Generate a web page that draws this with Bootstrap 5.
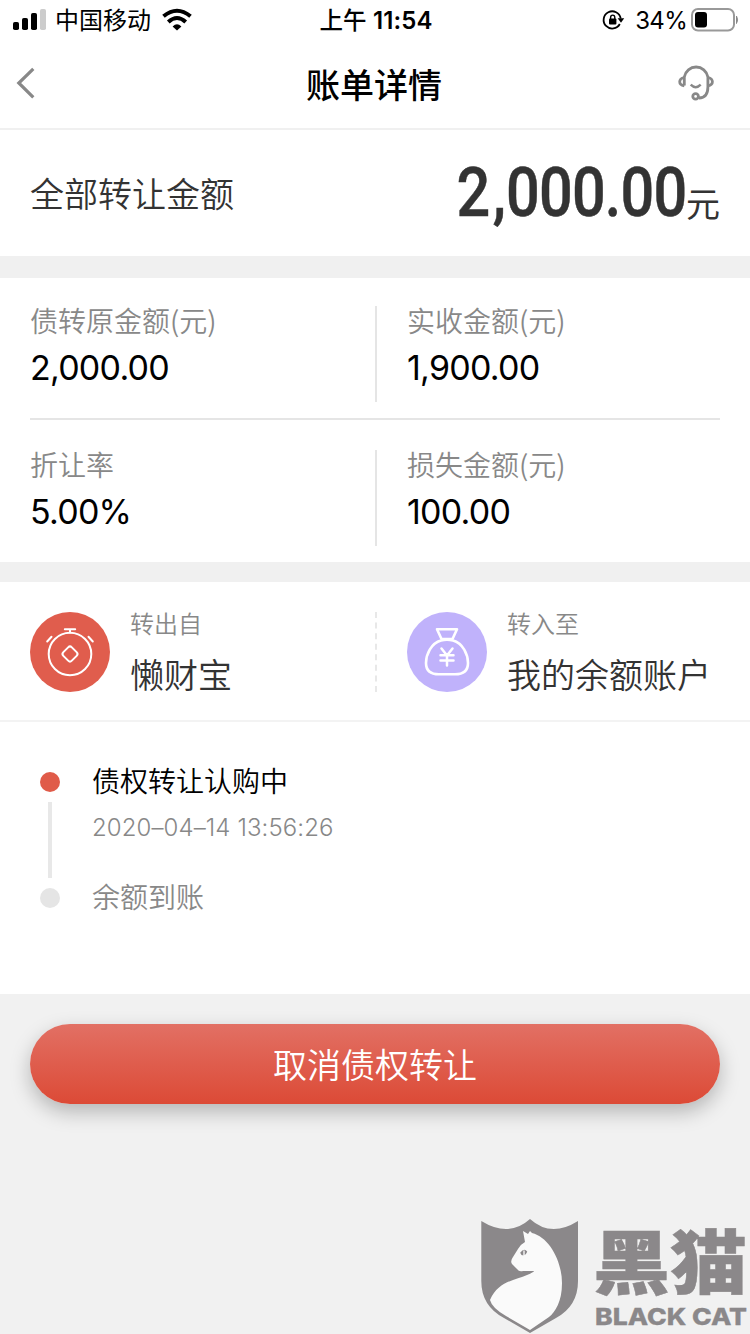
<!DOCTYPE html>
<html lang="zh-CN">
<head>
<meta charset="utf-8">
<meta name="viewport" content="width=device-width, initial-scale=1">
<title>账单详情</title>
<link rel="stylesheet" href="https://cdn.jsdelivr.net/npm/bootstrap@5.3.0/dist/css/bootstrap.min.css">
<style>
  body { font-family: Inter, "Noto Sans CJK SC", sans-serif; background: #f1f1f1; color: #000; height: 1334px; overflow: hidden; }
  svg { display: block; flex: none; overflow: visible; }
  .thin-text { font-family: "Noto Sans CJK SC DemiLight", "Noto Sans CJK SC", sans-serif; font-weight: 350; }
  .status-bar { height: 40px; font-size: 24px; line-height: 40px; padding: 0 11px 0 13px; }
  .status-side { flex: 1 1 0; }
  .status-side span, .status-time { padding-top: 2px; }
  .carrier { margin: 0 11px 0 9px; }
  .charge { margin: 0 4px 0 10px; letter-spacing: -.7px; }
  .status-time { font-weight: 500; font-size: 23.5px; letter-spacing: .1px; }
  .status-time b { font-weight: 600; font-size: 24px; }
  .title-bar { height: 90px; border-bottom: 2px solid #f0f0f0; padding: 0 36px 0 16px; }
  .title-bar > svg:last-child { margin-left: auto; }
  .title-bar h1 { font-size: 34px; font-weight: 500; line-height: 88px; padding-top: 3px; margin: 0 0 0 270px; }
  .panel { background: #fff; padding: 0 30px; }
  .total { height: 126px; color: #333; }
  .total-label { font-size: 34px; line-height: 126px; }
  .total-sum { font: 500 69px/126px Roboto, sans-serif; transform: scaleX(.86); transform-origin: right; letter-spacing: -.95px; -webkit-text-stroke: .5px #333; }
  .total-sum i { font-style: normal; margin: 0 1px 0 4px; }
  .total-unit { font-size: 34px; line-height: 40px; padding-top: 24px; }
  .band { height: 22px; background: #f0f0f0; }
  .band-thin { height: 20px; }
  .figures { height: 284px; }
  .pair { height: 140px; padding-top: 28px; }
  .pair + .pair { height: 144px; padding-top: 30px; border-top: 2px solid #e5e5e5; }
  .half-left { width: 345px; height: 96px; }
  .half-right { height: 96px; padding-left: 30px; border-left: 2px solid #e5e5e5; }
  .caption { font-size: 28px; line-height: 28px; color: #888; }
  .value { font-size: 34px; line-height: 40px; margin-top: 14px; letter-spacing: -.75px; font-weight: 380; }
  .accounts { height: 140px; padding-top: 30px; border-bottom: 2px solid #f3f3f3; }
  .account-left { width: 345px; }
  .account-text { margin: -1px 0 0 20px; }
  .account-right { padding-left: 30px; height: 80px; border-left: 2px dashed #e8e8e8; }
  .from-to { font-size: 24px; line-height: 24px; color: #888; }
  .account-name { font-size: 34px; line-height: 40px; color: #333; margin-top: 19px; white-space: nowrap; }
  .progress-panel { height: 272px; padding: 50px 30px 0 40px; }
  .rail { width: 20px; margin-right: 32px; }
  .dot { width: 20px; height: 20px; border-radius: 50%; background: #e5e5e5; }
  .dot-on { background: #e05b49; }
  .rail-line { width: 4px; height: 76px; margin: 10px 0; background: #e8e8e8; }
  .steps { margin-top: -10px; }
  .step { font-size: 28px; line-height: 36px; }
  .step-later { color: #888; }
  .stamp { font-size: 24px; line-height: 30px; color: #888; margin: 15px 0 35px; font-weight: 300; letter-spacing: .1px; }
  .cancel { width: 690px; height: 80px; margin: 30px 30px 0; padding: 0; font-size: 34px; line-height: 80px; color: #fff; border: 0;
    background: linear-gradient(#e27064, #dc4a36); box-shadow: 0 8px 20px rgba(0,0,0,.25); }
  .brand { width: 270px; height: 116px; margin-top: 114px; }
</style>
<script src="https://cdn.jsdelivr.net/npm/bootstrap@5.3.0/dist/js/bootstrap.bundle.min.js"></script>
</head>
<body>
<header class="bg-white">
  <div class="status-bar d-flex align-items-center">
    <div class="status-side d-flex align-items-center">
      <svg width="33" height="22" viewBox="0 0 33 22"><rect y="13" width="6" height="8" rx="1.8"/><rect x="9" y="9" width="6" height="12" rx="1.8"/><rect x="18" y="4" width="6" height="17" rx="1.8"/><rect x="27" width="6" height="21" rx="1.8" fill="#ccc"/></svg>
      <span class="carrier">中国移动</span>
      <svg width="30" height="22" viewBox="0 0 30 22" fill="none" stroke="#000" stroke-width="4"><path d="M1.5 7.2Q15-3.8 28.5 7.2"/><path d="M6.3 13Q15 5 23.7 13"/><path d="M10.6 17.4Q15 13.2 19.4 17.4L15 21.5Z" fill="#000" stroke="none"/></svg>
    </div>
    <div class="status-time">上午 <b>11:54</b></div>
    <div class="status-side d-flex align-items-center justify-content-end">
      <svg width="22" height="20" viewBox="0 0 22 20"><path d="M16.8 14A8.6 8.6 0 1 1 17.7 8.5" fill="none" stroke="#000" stroke-width="1.8"/><path d="M14.6 8.2H21.2L18 12.7Z"/><rect x="6" y="8.6" width="7.4" height="6" rx="1"/><path d="M7.6 9V7.4a2.1 2.3 0 0 1 4.2 0V9" fill="none" stroke="#000" stroke-width="1.4"/></svg>
      <span class="charge">34%</span>
      <svg width="48" height="24" viewBox="0 0 48 24"><rect x="1" y="1" width="42" height="21.5" rx="6" fill="none" stroke="#999" stroke-width="2"/><rect x="4" y="4" width="12" height="15.5" rx="3"/><path d="M45.5 8Q47.6 11.8 45.5 15.5Z" fill="#888" stroke="#888"/></svg>
    </div>
  </div>
  <nav class="title-bar d-flex align-items-center">
    <svg width="20" height="32" viewBox="0 0 20 32" fill="none" stroke="#888" stroke-width="3.2"><path d="M17.3 .8 2.8 15 17.3 29.3"/></svg>
    <h1>账单详情</h1>
    <svg width="36" height="38" viewBox="0 0 36 38" fill="none" stroke="#888" stroke-width="2.8"><path d="M6.3 20.5V12a12 12.2 0 0 1 23.6 0V22Q29.9 32.8 21 33"/><path d="M6.3 12.5Q1.7 13.5 1.7 16.8T6.3 20.9"/><path d="M29.9 12.5Q34.4 13.5 34.4 16.8T29.9 20.9"/><path d="M12.7 19.7Q17.7 24.7 22.7 19.7" stroke-width="2.4"/><circle cx="17.6" cy="31.4" r="2.8"/></svg>
  </nav>
</header>
<main>
  <section class="panel total d-flex justify-content-between">
    <div class="total-label thin-text">全部转让金额</div>
    <div class="d-flex align-items-center"><span class="total-sum">2<i>,</i>000.00</span><span class="total-unit">元</span></div>
  </section>
  <div class="band"></div>
  <section class="panel figures">
    <div class="pair d-flex">
      <div class="half-left"><div class="caption thin-text">债转原金额(元)</div><div class="value">2,000.00</div></div>
      <div class="half-right"><div class="caption thin-text">实收金额(元)</div><div class="value">1,900.00</div></div>
    </div>
    <div class="pair d-flex">
      <div class="half-left"><div class="caption thin-text">折让率</div><div class="value">5.00%</div></div>
      <div class="half-right"><div class="caption thin-text">损失金额(元)</div><div class="value">100.00</div></div>
    </div>
  </section>
  <div class="band band-thin"></div>
  <section class="panel accounts d-flex">
    <div class="account-left d-flex">
      <svg width="80" height="80" viewBox="0 0 80 80" fill="none" stroke="#fff" stroke-width="2" stroke-linecap="round"><circle cx="40" cy="40" r="40" fill="#e05d4d" stroke="none"/><circle cx="40" cy="42" r="21.3"/><path d="M34.8 17.3H45.2M40 17.3V20.5M17.2 29.5 21.5 24.8M62.8 29.5 58.5 24.8"/><rect x="34" y="36" width="12" height="12" rx="2.6" transform="rotate(45 40 42)"/></svg>
      <div class="account-text thin-text"><div class="from-to">转出自</div><div class="account-name">懒财宝</div></div>
    </div>
    <div class="account-right d-flex">
      <svg width="80" height="80" viewBox="0 0 80 80" fill="none" stroke="#fff" stroke-width="2.6" stroke-linecap="round" stroke-linejoin="round"><circle cx="40" cy="40" r="40" fill="#c0b2fb" stroke="none"/><path d="M34.5 27 30 17.3H50L45.5 27Z"/><path d="M34 28.5Q40 26.8 46 28.5C56 31 61 43 61 51Q61 62.3 48 62.3H32Q19 62.3 19 51C19 43 24 31 34 28.5Z"/><path d="M34.5 36.5 40 43.5 45.5 36.5M33.5 43.3H46.5M33.5 48.6H46.5M40 43.5V53.5" stroke-width="2.5"/></svg>
      <div class="account-text thin-text"><div class="from-to">转入至</div><div class="account-name">我的余额账户</div></div>
    </div>
  </section>
  <section class="panel progress-panel d-flex">
    <div class="rail d-flex flex-column align-items-center"><i class="dot dot-on"></i><i class="rail-line"></i><i class="dot"></i></div>
    <div class="steps">
      <div class="step thin-text">债权转让认购中</div>
      <div class="stamp">2020–04–14 13:56:26</div>
      <div class="step step-later thin-text">余额到账</div>
    </div>
  </section>
  <button type="button" class="btn cancel thin-text rounded-pill d-block">取消债权转让</button>
</main>
<footer class="brand ms-auto">
  <svg width="270" height="116" viewBox="0 0 270 116">
    <path d="M1.3 3Q29 20 50 1Q71 20 98 3V63Q98 88 76 100L50 115L24 100Q1.3 88 1.3 63Z" fill="#8b888a"/>
    <path d="M50 112 26 98Q12 90 10 82C18 63 36 62 47 57Q54 54 54 53H43Q39 54 37 51L32 46Q30 43 33 39L38 31Q41 26 45 24L43 13 48 16 50 13 52 15C69 19 82 43 82 65C82 84 75 94 69 99Z" fill="#fafafa"/>
    <path d="M40.2 34.8Q44 29.5 47.2 33.5Q46 38 41.5 37Z" fill="#8b888a"/><path d="M44 32.5V37.3" stroke="#fff" stroke-width="1.3"/>
    <g fill="#8b888a" stroke="#8b888a"><text transform="translate(113 71) scale(1.1 1)" font-family="Noto Sans CJK SC" font-size="70" font-weight="900" stroke-width=".5">黑猫</text>
    <text x="115" y="107" textLength="152" lengthAdjust="spacingAndGlyphs" font-family="Inter" font-size="23" font-weight="800" stroke-width=".3">BLACK CAT</text></g>
  </svg>
</footer>
</body>
</html>
